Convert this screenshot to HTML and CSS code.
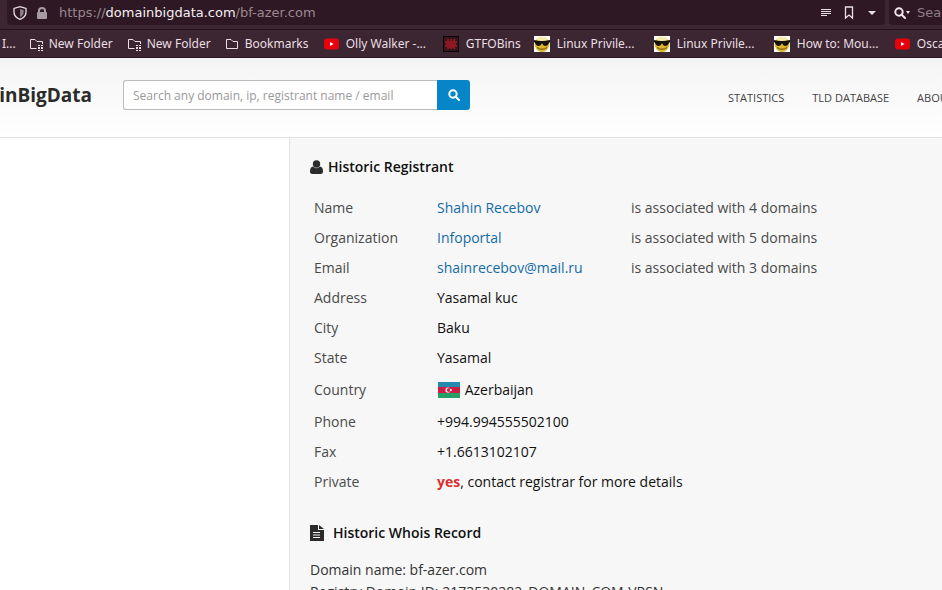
FILE: index.html
```html
<!DOCTYPE html>
<html lang="en">

<head>
    <meta charset="UTF-8">
    <meta name="viewport" content="width=device-width, initial-scale=1.0">
    <title>bf-azer.com - DomainBigData</title>
    <link rel="stylesheet" href="styles.css">
</head>

<body>
    <!-- icons used more than once -->
    <svg class="sprite" aria-hidden="true">
        <symbol id="folder" viewBox="0 0 16 16">
            <path d="M1.500 12.500V3.500H6L8 5.500H12.500V12.500Z" fill="none" stroke="currentColor" />
        </symbol>
        <symbol id="folder-dots" viewBox="0 0 16 16">
            <path d="M7.500 12.500H1.500V3.500H6L8 5.500H13.500V8" fill="none" stroke="currentColor" />
            <path d="M9 9h2v1H9zM12 9h2v1h-2zM9 11h2v2H9zM12 11h2v2h-2zM9 14h2v1H9zM12 14h2v1h-2z" fill="currentColor" />
        </symbol>
        <symbol id="youtube" viewBox="0 0 16 16">
            <rect x="1" y="2.500" width="15" height="11" rx="3" fill="#e8000b" />
            <path d="M7 6V10L10.500 8Z" fill="#fff" />
        </symbol>
        <symbol id="shades" viewBox="0 0 16 16">
            <rect width="16" height="16" fill="#fff" />
            <ellipse cx="8" cy="8.500" rx="7.300" ry="7.500" fill="#dcb52c" />
            <ellipse cx="8" cy="3" rx="5.500" ry="2.500" fill="#f6ecae" />
            <path d="M0 4Q8 6 16 4V6L15 7Q14 10 11 10Q9 10 8 7Q7 10 5 10Q2 10 1 7L0 6Z" fill="#17130c" />
            <path d="M3 11.500Q8 15 13 11.500" fill="none" stroke="#6e5212" />
        </symbol>
        <symbol id="magnifier" viewBox="0 0 12 12">
            <circle cx="5" cy="5" r="3.700" fill="none" stroke="currentColor" stroke-width="2" />
            <path d="M7.500 7.500L11 11" stroke="currentColor" stroke-width="2" stroke-linecap="round" />
        </symbol>
    </svg>

    <div class="browser">
        <div class="toolbar">
            <div class="url-bar">
                <svg class="shield" viewBox="0 0 14 14" aria-hidden="true">
                    <path d="M7 .7L13 2.500V6Q13 11 7 13.300Q1 11 1 6V2.500Z" fill="none" stroke="currentColor" stroke-width="1.300" />
                    <path d="M7 3V11Q10.700 9.500 10.700 6V4Z" fill="currentColor" opacity=".5" />
                </svg>
                <svg class="lock" viewBox="0 0 12 14" aria-hidden="true">
                    <path d="M3 7V4.500Q3 2 6 2T9 4.500V7" fill="none" stroke="currentColor" stroke-width="2" />
                    <rect x="1" y="6" width="10" height="7" rx="1" fill="currentColor" />
                </svg>
                <span class="url">https://<b>domainbigdata.com</b>/bf-azer.com</span>
                <svg class="reader" viewBox="0 0 12 10" aria-hidden="true">
                    <path d="M1 1.500H11M1 3.500H11M1 5.500H11M1 7.500H7" stroke="currentColor" />
                </svg>
                <svg class="mark" viewBox="0 0 10 14" aria-hidden="true">
                    <path d="M1.500 1H8.500V12L5 9L1.500 12Z" fill="none" stroke="currentColor" stroke-width="1.300" />
                </svg>
                <svg class="caret" viewBox="0 0 8 6" aria-hidden="true">
                    <path d="M0 1H8L4 5Z" fill="currentColor" />
                </svg>
            </div>
            <div class="search-bar">
                <svg class="find" aria-hidden="true"><use href="#magnifier" /></svg>
                <svg class="find-caret" viewBox="0 0 4 3" aria-hidden="true"><path d="M0 0H4L2 3Z" fill="currentColor" /></svg>
                <span>Search</span>
            </div>
        </div>
        <nav class="bookmarks" aria-label="Bookmarks">
            <a href="#">I...</a>
            <a href="#" class="folder"><svg><use href="#folder-dots" /></svg>New Folder</a>
            <a href="#" class="folder"><svg><use href="#folder-dots" /></svg>New Folder</a>
            <a href="#" class="folder"><svg><use href="#folder" /></svg>Bookmarks</a>
            <a href="#" class="long"><svg><use href="#youtube" /></svg>Olly Walker -...</a>
            <a href="#"><svg viewBox="0 0 16 16">
                    <rect x=".5" y=".5" width="15" height="15" fill="#35141c" stroke="#0c0608" />
                    <path d="M4 3h2v2h1V3h2v2h1V3h2v2h2v2h-1v2h1v2h-2v2h-2v-1H9v1H7v-1H6v1H4v-2H2V9h1V7H2V5h2z" fill="#8c1720" />
                </svg>GTFOBins</a>
            <a href="#" class="long"><svg><use href="#shades" /></svg>Linux Privile...</a>
            <a href="#" class="long"><svg><use href="#shades" /></svg>Linux Privile...</a>
            <a href="#" class="long"><svg><use href="#shades" /></svg>How to: Mou...</a>
            <a href="#"><svg><use href="#youtube" /></svg>Oscar</a>
        </nav>
    </div>

    <header class="site-header">
        <a href="#" class="logo">DomainBigData</a>
        <form class="search">
            <input type="text" aria-label="Search" placeholder="Search any domain, ip, registrant name / email">
            <button type="button" aria-label="Search"><svg><use href="#magnifier" /></svg></button>
        </form>
        <nav class="menu">
            <a href="#">STATISTICS</a>
            <a href="#">TLD DATABASE</a>
            <a href="#">ABOUT</a>
        </nav>
    </header>

    <main>
        <aside></aside>
        <section class="content">
            <h2>
                <svg class="user" viewBox="0 0 13 14" aria-hidden="true">
                    <circle cx="6.500" cy="4" r="3.700" fill="currentColor" />
                    <path d="M3 6.500Q6.500 10 10 6.500Q13 7 13 11.500Q13 14 10.500 14H2.500Q0 14 0 11.500Q0 7 3 6.500Z" fill="currentColor" />
                </svg>
                Historic Registrant
            </h2>
            <table>
                <tr><td>Name</td><td><a href="#">Shahin Recebov</a></td><td>is associated with 4 domains</td></tr>
                <tr><td>Organization</td><td><a href="#">Infoportal</a></td><td>is associated with 5 domains</td></tr>
                <tr><td>Email</td><td><a href="#">shainrecebov@mail.ru</a></td><td>is associated with 3 domains</td></tr>
                <tr><td>Address</td><td colspan="2">Yasamal kuc</td></tr>
                <tr><td>City</td><td colspan="2">Baku</td></tr>
                <tr><td>State</td><td colspan="2">Yasamal</td></tr>
                <tr class="country">
                    <td>Country</td>
                    <td colspan="2">
                        <svg class="flag" viewBox="0 0 22 16" preserveAspectRatio="xMidYMid" aria-hidden="true">
                            <rect width="22" height="16" fill="#279f68" />
                            <rect width="22" height="11" fill="#ce1c43" />
                            <rect width="22" height="5" fill="#248bae" />
                            <circle cx="10" cy="8" r="2.600" fill="#fff" />
                            <circle cx="10.800" cy="8" r="2" fill="#ce1c43" />
                            <circle cx="12.800" cy="8" r="1.100" fill="#fff" />
                        </svg>
                        Azerbaijan
                    </td>
                </tr>
                <tr><td>Phone</td><td colspan="2">+994.994555502100</td></tr>
                <tr><td>Fax</td><td colspan="2">+1.6613102107</td></tr>
                <tr><td>Private</td><td colspan="2"><strong>yes</strong>, contact registrar for more details</td></tr>
            </table>

            <h2 class="whois">
                <svg class="file" viewBox="0 0 14 16" aria-hidden="true">
                    <path d="M0 0H8V5H14V16H0ZM9 0L14 4H9Z" fill="currentColor" />
                    <path d="M3 7.500H10M3 10H10M3 12.500H10" stroke="#f7f7f7" />
                </svg>
                Historic Whois Record
            </h2>
            <p>Domain name: bf-azer.com<br>Registry Domain ID: 2173530282_DOMAIN_COM-VRSN</p>
        </section>
    </main>
</body>

</html>
```
FILE: styles.css
```css
* {
    box-sizing: border-box;
}

body {
    display: flex;
    flex-direction: column;
    height: 100vh;
    margin: 0;
    overflow: hidden;
    background: #fff;
    color: #111;
    font-family: "Open Sans", sans-serif;
    font-size: 14px;
}

a {
    color: #146ba8;
    text-decoration: none;
}

svg {
    flex: none;
}

.sprite {
    display: none;
}

/* browser bars */
.browser {
    flex: none;
    background: #3c2631;
    color: #e9dfe4;
    font-family: "Noto Sans", sans-serif;
    font-size: 12px;
    border-bottom: 1px solid #2a1620;
}

.toolbar {
    display: flex;
    gap: 4px;
    height: 30px;
    padding: 0 0 4px 7px;
    border-bottom: 1px solid #26121c;
}

.url-bar,
.search-bar {
    display: flex;
    align-items: center;
    background: #2e1823;
}

.url-bar {
    flex: 1;
    min-width: 0;
    padding: 0 9px 0 6px;
    border-radius: 0 0 4px 4px;
}

.search-bar {
    width: 53px;
    overflow: hidden;
    padding-left: 5px;
    border-radius: 0 0 0 4px;
    color: #8f7d87;
    font-family: "DejaVu Sans", sans-serif;
    font-size: 13px;
}

.shield {
    width: 14px;
    height: 14px;
}

.lock {
    width: 12px;
    height: 14px;
    margin: 0 11px 0 9px;
    color: #a99ba3;
}

.url {
    flex: 1;
    color: #9a8892;
    font-family: "DejaVu Sans", sans-serif;
    font-size: 13px;
}

.url b {
    color: #f6eff3;
    font-weight: normal;
}

.reader {
    width: 12px;
    height: 10px;
}

.mark {
    width: 10px;
    height: 14px;
    margin: 0 14px 0 12px;
}

.caret {
    width: 8px;
    height: 6px;
}

.find {
    width: 12px;
    height: 12px;
    color: #f0e6eb;
}

.find-caret {
    width: 4px;
    height: 3px;
    margin-right: 7px;
    color: #f0e6eb;
}

.bookmarks {
    display: flex;
    align-items: center;
    gap: 13px;
    height: 27px;
    padding-left: 2px;
    overflow: hidden;
}

.bookmarks a {
    display: flex;
    flex: none;
    align-items: center;
    gap: 7px;
    color: #e9dfe4;
    white-space: nowrap;
}

.bookmarks .folder {
    gap: 4px;
    width: 85px;
}

.bookmarks .long {
    width: 107px;
}

.bookmarks svg {
    width: 16px;
    height: 16px;
}

/* site header */
.site-header {
    display: flex;
    flex: none;
    height: 80px;
    overflow: hidden;
    background: linear-gradient(#f4f4f4, #fff);
    border-bottom: 1px solid #e2e2e2;
}

.logo {
    display: flex;
    flex: none;
    justify-content: flex-end;
    width: 92px;
    margin-top: 22px;
    color: #2b2b2b;
    font-size: 19px;
    font-weight: bold;
    line-height: 30px;
}

.search {
    display: flex;
    flex: none;
    width: 347px;
    height: 30px;
    margin: 22px 0 0 31px;
}

.search input {
    flex: 1;
    min-width: 0;
    padding: 0 9px;
    border: 1px solid #bbb;
    border-right: 0;
    border-radius: 3px 0 0 3px;
    background: #fff;
    font-family: inherit;
    font-size: 12px;
}

.search input::placeholder {
    color: #999;
}

.search button {
    display: flex;
    align-items: center;
    justify-content: center;
    width: 33px;
    padding: 0;
    border: 0;
    border-radius: 0 3px 3px 0;
    background: #0685c9;
    color: #fff;
}

.search button svg {
    width: 12px;
    height: 12px;
}

.menu {
    display: flex;
    gap: 28px;
    margin: 32px 0 0 258px;
}

.menu a {
    color: #444;
    font-size: 11px;
    line-height: 16px;
    white-space: nowrap;
}

/* record */
main {
    display: flex;
    flex: 1;
    min-height: 0;
}

aside {
    flex: none;
    width: 289px;
}

.content {
    flex: 1;
    padding: 18px 20px 0;
    overflow: hidden;
    border-left: 1px solid #e5e5e5;
    background: #f7f7f7;
}

h2 {
    display: flex;
    align-items: center;
    gap: 5px;
    margin: 0;
    font-size: 14px;
    font-weight: 600;
    line-height: 22px;
}

h2 svg {
    color: #2b2b2b;
}

.user {
    width: 13px;
    height: 14px;
}

.file {
    width: 14px;
    height: 16px;
}

.whois {
    gap: 9px;
    margin-top: 25px;
}

table {
    margin-top: 15px;
    border-collapse: collapse;
}

td {
    height: 30px;
    padding: 0 4px;
    line-height: 20px;
    white-space: nowrap;
}

td:first-child {
    width: 123px;
    color: #4a4a4a;
}

td:nth-child(2) {
    width: 194px;
}

td:nth-child(3) {
    color: #4a4a4a;
}

.country td {
    height: 34px;
}

.flag {
    width: 24px;
    height: 16px;
    vertical-align: -3px;
}

strong {
    color: #d9302f;
}

p {
    margin: 15px 0 0;
    color: #333;
    line-height: 22px;
}
```
